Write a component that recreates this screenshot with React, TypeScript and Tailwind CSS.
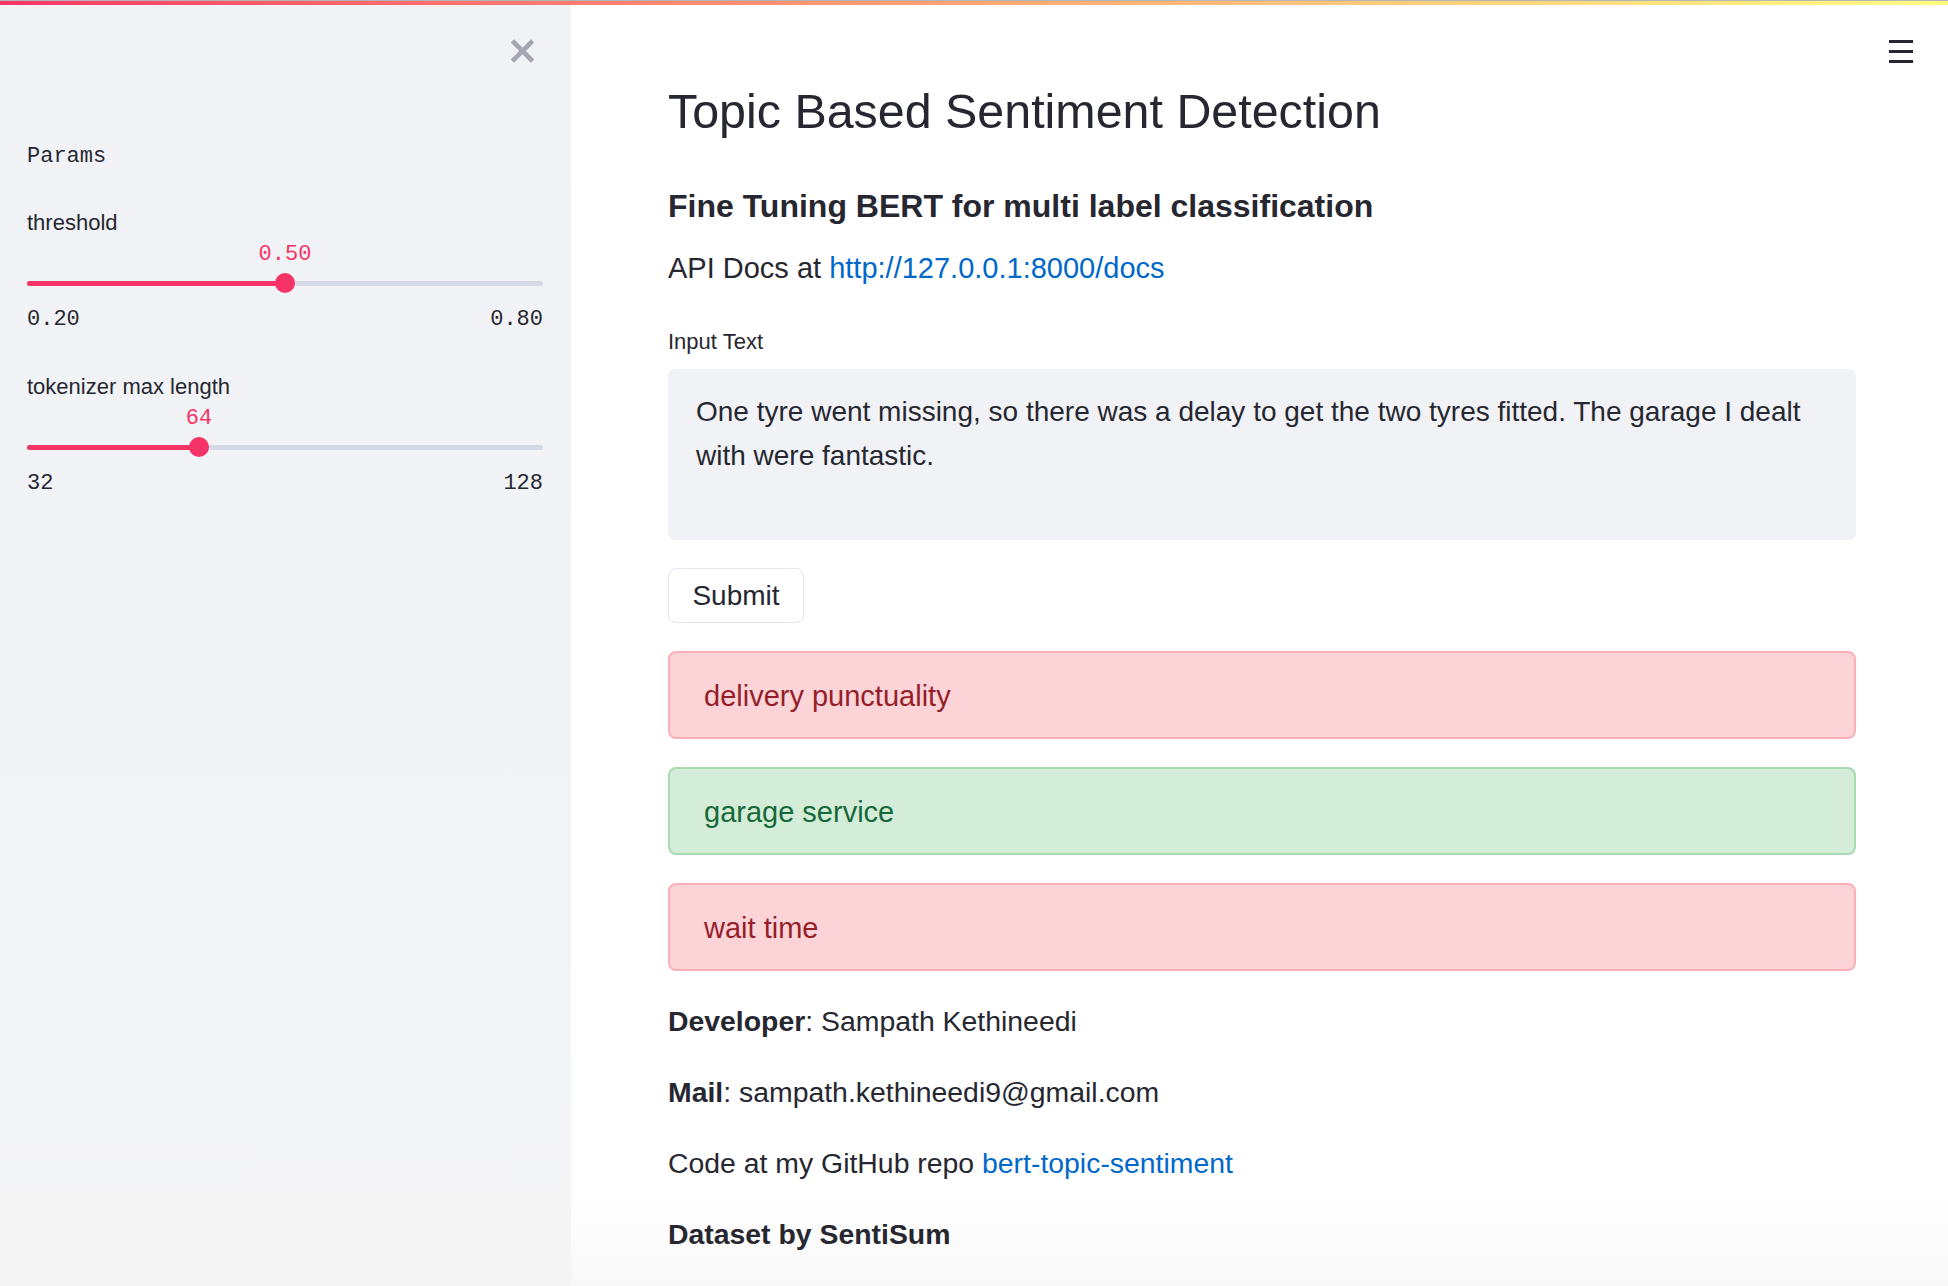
import React from "react";

const sliders = [
  { label: "threshold", value: "0.50", min: "0.20", max: "0.80", pct: 0.5 },
  { label: "tokenizer max length", value: "64", min: "32", max: "128", pct: 1 / 3 },
];

function Slider({ label, value, min, max, pct }: { label: string; value: string; min: string; max: string; pct: number }) {
  const left = `${pct * 100}%`;
  return (
    <div>
      <div className="h-[30px] leading-[30px] text-[22px] text-[#262730]">{label}</div>
      <div className="relative h-[28px]">
        <span
          className="absolute top-[3px] -translate-x-1/2 font-['Liberation_Mono',monospace] text-[22px] leading-[28px] text-[#f63366]"
          style={{ left }}
        >
          {value}
        </span>
      </div>
      <div className="relative h-[34px]">
        <div className="absolute left-0 right-0 top-[15px] h-[5px] rounded-full bg-[#d5dae5]" />
        <div className="absolute left-0 top-[15px] h-[5px] rounded-full bg-[#f63366]" style={{ width: left }} />
        <div className="absolute top-[7px] size-[20px] -translate-x-1/2 rounded-full bg-[#f63366]" style={{ left }} />
      </div>
      <div className="mt-[6px] flex h-[28px] justify-between font-['Liberation_Mono',monospace] text-[22px] leading-[28px] text-[#262730]">
        <span>{min}</span>
        <span>{max}</span>
      </div>
    </div>
  );
}

function Alert({ kind, text }: { kind: "error" | "success"; text: string }) {
  const cls =
    kind === "error"
      ? "bg-[#fcd4d7] border-[#fab0b6] text-[#961e2a]"
      : "bg-[#d3edd8] border-[#a9dab4] text-[#17693a]";
  return (
    <div className={`flex h-[88px] items-center rounded-[8px] border-2 pl-[34px] pt-[3px] text-[29px] ${cls}`}>{text}</div>
  );
}

export default function App() {
  return (
    <div className="relative flex h-[1286px] w-full overflow-hidden bg-white font-['Liberation_Sans',Arial,sans-serif] text-[#262730]">
      {/* Sidebar */}
      <aside className="w-[571px] shrink-0 bg-linear-to-b from-[#f0f2f6] via-[#f3f4f7] via-80% to-[#f5f5f5]">
        <div className="flex h-[142px] items-start justify-end pr-[37px] pt-[39px]">
          <svg width="23" height="24" viewBox="0 0 23 24">
            <path d="M3 3.5 L20 20.5 M20 3.5 L3 20.5" stroke="#a3a7b1" strokeWidth="4.6" strokeLinecap="square" />
          </svg>
        </div>
        <div className="pl-[27px] pr-[28px]">
          <div className="h-[30px] font-['Liberation_Mono',monospace] text-[22px] leading-[30px]">Params</div>
          <div className="mt-[36px]">
            <Slider {...sliders[0]} />
          </div>
          <div className="mt-[38px]">
            <Slider {...sliders[1]} />
          </div>
        </div>
      </aside>

      {/* Main */}
      <main className="flex flex-1 flex-col bg-linear-to-b from-white from-93% to-[#f8f8f8] pl-[97px] pr-[92px]">
        <h1 className="mt-[81px] h-[60px] text-[48.4px] leading-[60px] font-normal">Topic Based Sentiment Detection</h1>
        <h3 className="mt-[43px] h-[44px] text-[32px] leading-[44px] font-bold">
          Fine Tuning BERT for multi label classification
        </h3>
        <p className="mt-[20px] h-[40px] text-[29px] leading-[40px]">
          API Docs at <a className="text-[#0068c9]">http://127.0.0.1:8000/docs</a>
        </p>
        <div className="mt-[39px] h-[30px] text-[22px] leading-[30px]">Input Text</div>
        <div className="mt-[12px] h-[171px] rounded-[7px] bg-[#f0f2f6] px-[28px] pt-[21px] text-[28px] leading-[44px]">
          One tyre went missing, so there was a delay to get the two tyres fitted. The garage I dealt with were fantastic.
        </div>
        <div className="mt-[28px]">
          <button className="flex h-[55px] w-[136px] items-center justify-center rounded-[8px] border-[1.5px] border-[#e3e6ec] bg-white text-[28px] text-[#262730]">
            Submit
          </button>
        </div>
        <div className="mt-[28px]">
          <Alert kind="error" text="delivery punctuality" />
        </div>
        <div className="mt-[28px]">
          <Alert kind="success" text="garage service" />
        </div>
        <div className="mt-[28px]">
          <Alert kind="error" text="wait time" />
        </div>
        <p className="mt-[30px] h-[40px] text-[28.4px] leading-[40px]">
          <b>Developer</b>: Sampath Kethineedi
        </p>
        <p className="mt-[31px] h-[40px] text-[28.4px] leading-[40px]">
          <b>Mail</b>: sampath.kethineedi9@gmail.com
        </p>
        <p className="mt-[31px] h-[40px] text-[28.4px] leading-[40px]">
          Code at my GitHub repo <a className="text-[#0068c9]">bert-topic-sentiment</a>
        </p>
        <p className="mt-[31px] h-[40px] text-[28.4px] leading-[40px] font-bold">Dataset by SentiSum</p>
      </main>

      {/* Header decoration */}
      <div className="pointer-events-none absolute left-0 right-0 top-0">
        <div className="h-[1px] bg-[#b5b5b5]" />
        <div className="h-[4px] bg-linear-to-r from-[#f63366] to-[#fffd80]" />
      </div>

      {/* Toolbar menu */}
      <div className="absolute right-[35px] top-[40px] flex w-[24px] flex-col gap-[7px]">
        <span className="h-[3px] w-full bg-[#262730]" />
        <span className="h-[3px] w-full bg-[#262730]" />
        <span className="h-[3px] w-full bg-[#262730]" />
      </div>
    </div>
  );
}
